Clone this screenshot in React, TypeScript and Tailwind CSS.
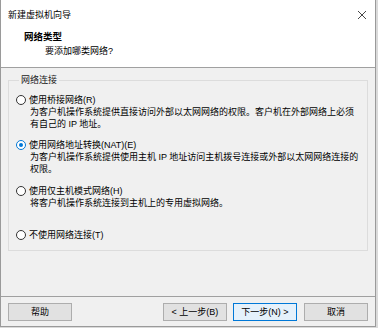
import React from 'react';

type Option = {
  label: string;
  desc?: string[];
  checked?: boolean;
  gap: string;
};

const OPTIONS: Option[] = [
  {
    label: '使用桥接网络(R)',
    desc: ['为客户机操作系统提供直接访问外部以太网网络的权限。客户机在外部网络上必须', '有自己的 IP 地址。'],
    gap: 'mt-[8px]',
  },
  {
    label: '使用网络地址转换(NAT)(E)',
    desc: ['为客户机操作系统提供使用主机 IP 地址访问主机拨号连接或外部以太网网络连接的', '权限。'],
    checked: true,
    gap: 'mt-[9px]',
  },
  {
    label: '使用仅主机模式网络(H)',
    desc: ['将客户机操作系统连接到主机上的专用虚拟网络。'],
    gap: 'mt-[10px]',
  },
  {
    label: '不使用网络连接(T)',
    gap: 'mt-[20px]',
  },
];

function Radio({ checked }: { checked?: boolean }) {
  return (
    <span
      className={
        checked
          ? 'flex h-[10px] w-[10px] shrink-0 items-center justify-center rounded-full border border-[#0078d7] bg-white'
          : 'flex h-[10px] w-[10px] shrink-0 items-center justify-center rounded-full border border-[#333] bg-white'
      }
    >
      {checked && <span className="h-[4px] w-[4px] rounded-full bg-[#0078d7]" />}
    </span>
  );
}

function Btn({ children, primary }: { children: React.ReactNode; primary?: boolean }) {
  return (
    <button
      className={
        primary
          ? 'flex h-[18px] w-[64px] items-center justify-center border border-[#0078d7] bg-[#e5f1fb] text-[9px] leading-none text-black'
          : 'flex h-[18px] w-[64px] items-center justify-center border border-[#adadad] bg-[#e1e1e1] text-[9px] leading-none text-black'
      }
    >
      {children}
    </button>
  );
}

export default function App() {
  return (
    <div
      className="h-[328px] w-[378px] bg-[#dadada] text-black"
      style={{ fontFamily: '"Liberation Sans", "Noto Sans CJK SC", sans-serif' }}
    >
      <div className="flex h-[327px] w-[376px] flex-col border-x border-b border-[#9a9a9a] bg-[#f0f0f0]">
        {/* header */}
        <div className="h-[68px] shrink-0 border-b border-[#a0a0a0] bg-white">
          <div className="flex items-center justify-between pl-[7px] pr-[8px] pt-[9px]">
            <span className="text-[9px] leading-[12px]">新建虚拟机向导</span>
            <svg width="10" height="10" viewBox="0 0 10 10" className="mt-[-1px]">
              <path d="M1 1 L9 9 M9 1 L1 9" stroke="#333" strokeWidth="0.9" />
            </svg>
          </div>
          <div className="mt-[10px] pl-[23px] text-[9.5px] font-bold leading-[12px]">网络类型</div>
          <div className="mt-[2px] pl-[44px] text-[9px] leading-[12px]">要添加哪类网络?</div>
        </div>

        {/* body */}
        <div className="flex-1 px-[7px] pt-[6px]">
          <fieldset className="border border-[#dcdcdc] pb-[9px] pl-[7px] pr-[6px]">
            <legend className="ml-[3px] px-[2px] text-[9px] leading-[12px] text-[#222]">网络连接</legend>
            {OPTIONS.map((o) => (
              <div key={o.label} className={o.gap}>
                <div className="flex items-center gap-[3px] text-[9px] leading-[12px]">
                  <Radio checked={o.checked} />
                  <span>{o.label}</span>
                </div>
                {o.desc?.map((line) => (
                  <div key={line} className="pl-[14px] text-[9px] leading-[12px] whitespace-nowrap">
                    {line}
                  </div>
                ))}
              </div>
            ))}
          </fieldset>
        </div>

        {/* footer */}
        <div className="flex h-[30px] shrink-0 items-start justify-between border-t border-[#a0a0a0] px-[7px] pt-[6px]">
          <Btn>帮助</Btn>
          <div className="flex gap-[7px]">
            <div className="flex gap-[6px]">
              <Btn>&lt; 上一步(B)</Btn>
              <Btn primary>下一步(N) &gt;</Btn>
            </div>
            <Btn>取消</Btn>
          </div>
        </div>
      </div>
    </div>
  );
}
